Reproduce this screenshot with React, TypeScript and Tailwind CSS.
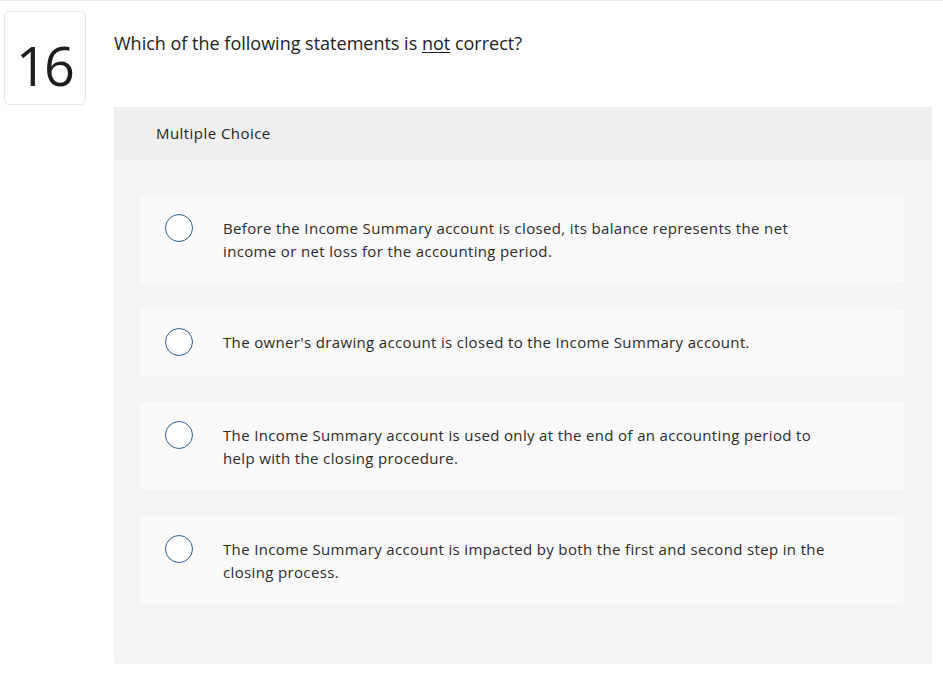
import { useState } from "react"

const choices = [
    "Before the Income Summary account is closed, its balance represents the net income or net loss for the accounting period.",
    "The owner's drawing account is closed to the Income Summary account.",
    "The Income Summary account is used only at the end of an accounting period to help with the closing procedure.",
    "The Income Summary account is impacted by both the first and second step in the closing process.",
]

const App = () => {
    const [picked, setPicked] = useState<number | null>(null)
    return (
        <div className="min-h-screen bg-white border-t border-[#ececec] font-['Open_Sans',sans-serif] text-[#222]">
            <div className="flex pt-[10px] pl-[4px] pr-[11px]">
                <div className="w-[82px] h-[94px] shrink-0 border border-[#e8e8e8] rounded-[5px] flex items-center justify-center">
                    <span className="text-[54px] leading-none tracking-[-3px] text-[#1d1d1d] mt-[14px] mr-[2px]">16</span>
                </div>
                <div className="flex-1 ml-[28px]">
                    <h2 className="text-[18px] leading-[24px] mt-[20px] text-[#222]">
                        Which of the following statements is <span className="underline underline-offset-2">not</span> correct?
                    </h2>
                    <div className="mt-[52px] rounded-[3px] bg-[#f4f4f4]">
                        <div className="h-[53px] bg-[#efefef] flex items-center pl-[42px] text-[15px] tracking-[0.03em]">Multiple Choice</div>
                        <div className="pt-[35px] pb-[60px] pl-[26px] pr-[28px] flex flex-col gap-[26px]">
                            {choices.map((text, i) => (
                                <label
                                    key={i}
                                    onClick={() => setPicked(i)}
                                    className="flex items-start bg-[#fafafa] rounded-[4px] pt-[22px] pb-[20px] pl-[25px] cursor-pointer"
                                >
                                    <span className="w-[28px] h-[28px] shrink-0 rounded-full border-[1.5px] border-[#2f5f8f] bg-white mt-[-3px] flex items-center justify-center">
                                        {picked === i && <span className="w-[14px] h-[14px] rounded-full bg-[#2f5f8f]" />}
                                    </span>
                                    <span className="ml-[30px] max-w-[612px] text-[15px] leading-[23px] tracking-[0.35px] text-[#2a2a2a]">{text}</span>
                                </label>
                            ))}
                        </div>
                    </div>
                </div>
            </div>
        </div>
    )
}

export default App
